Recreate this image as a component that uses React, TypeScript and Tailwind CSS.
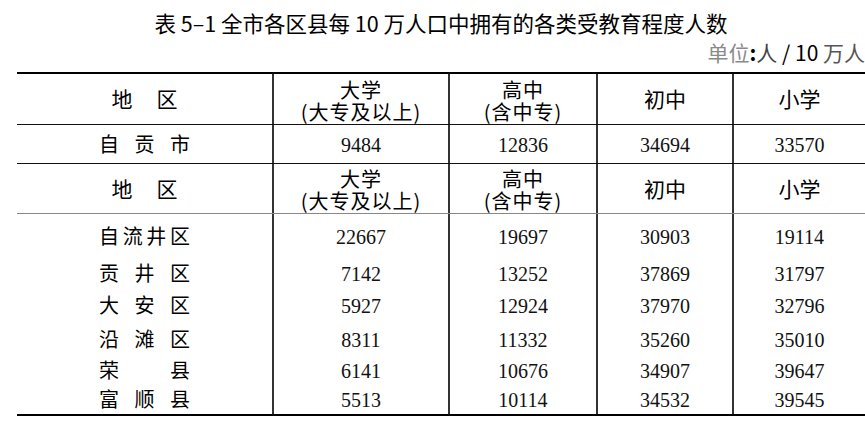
import React from "react";

const cjk = "font-['Noto_Sans_CJK_SC','Noto_Sans',sans-serif]";
const serif = "font-['Liberation_Serif','DejaVu_Serif',serif]";

const columns = ["w-[255px]", "w-[176px]", "w-[148px]", "w-[136px]", "w-[133px]"];

interface SpreadProps {
	text: string[];
	className: string;
}

// lays the characters of a region name out over a fixed width
const Spread = ({ text, className }: SpreadProps) => (
	<div className={`flex justify-between ${className}`}>
		{text.map((c, i) => (
			<span key={i}>{c}</span>
		))}
	</div>
);

const HeaderRow = ({ height, border }: { height: string; border: string }) => (
	<div className={`flex ${height} ${border} ${cjk} text-[21px] text-black`}>
		<div className={`${columns[0]} flex items-center justify-center`}>
			<Spread text={["地", "区"]} className="w-[66px]" />
		</div>
		<div className={`${columns[1]} border-l-2 border-[#333] flex items-center justify-center pt-[3px]`}>
			<p className="text-center text-[20px] leading-[22px] tracking-[1px] whitespace-pre-line">{"大学\n(大专及以上)"}</p>
		</div>
		<div className={`${columns[2]} border-l-2 border-[#333] flex items-center justify-center pt-[3px]`}>
			<p className="text-center text-[20px] leading-[22px] tracking-[1px] whitespace-pre-line">{"高中\n(含中专)"}</p>
		</div>
		<div className={`${columns[3]} border-l-2 border-[#333] flex items-center justify-center`}>初中</div>
		<div className={`${columns[4]} border-l-2 border-[#333] flex items-center justify-center`}>小学</div>
	</div>
);

interface DataRowProps {
	name: string[];
	values: string[];
	height: string;
	border?: string;
}

const DataRow = ({ name, values, height, border = "" }: DataRowProps) => (
	<div className={`flex ${height} ${border}`}>
		<div className={`${columns[0]} flex items-center justify-center ${cjk} text-[20px] text-black`}>
			<Spread text={name} className="w-[91px]" />
		</div>
		{values.map((v, i) => (
			<div
				key={i}
				className={`${columns[i + 1]} border-l-2 border-[#333] flex items-center justify-center pt-[2px] ${serif} text-[20px] text-[#111]`}
			>
				{v}
			</div>
		))}
	</div>
);

const rows = [
	{ name: ["自", "流", "井", "区"], values: ["22667", "19697", "30903", "19114"], height: "h-[44px]" },
	{ name: ["贡", "井", "区"], values: ["7142", "13252", "37869", "31797"], height: "h-[30px]" },
	{ name: ["大", "安", "区"], values: ["5927", "12924", "37970", "32796"], height: "h-[34px]" },
	{ name: ["沿", "滩", "区"], values: ["8311", "11332", "35260", "35010"], height: "h-[33px]" },
	{ name: ["荣", "县"], values: ["6141", "10676", "34907", "39647"], height: "h-[29px]" },
	{ name: ["富", "顺", "县"], values: ["5513", "10114", "34532", "39545"], height: "h-[30px]" },
];

export default function App() {
	return (
		<div className="w-[865px] h-[429px] bg-white overflow-hidden pl-[17px]">
			<h1 className={`mt-[8px] text-center leading-[30px] text-[21.5px] font-normal text-black ${cjk}`}>
				表 5–1 全市各区县每 10 万人口中拥有的各类受教育程度人数
			</h1>
			<div className={`mt-[2px] text-right leading-[24px] text-[21px] whitespace-nowrap ${cjk}`}>
				<span className="text-[#8a8a8a]">单位</span>
				<span className="text-black font-bold">:</span>
				<span className="text-[#444]">人 </span>
				<span className="text-black">/ 10 </span>
				<span className="text-[#555]">万人</span>
			</div>
			<div className="mt-[8px] w-[850px] border-t-2 border-b-2 border-black">
				<HeaderRow height="h-[51px]" border="border-b border-[#111]" />
				<DataRow
					name={["自", "贡", "市"]}
					values={["9484", "12836", "34694", "33570"]}
					height="h-[39px]"
					border="border-b border-[#111]"
				/>
				<HeaderRow height="h-[50px]" border="border-b border-[#888]" />
				{rows.map((r, i) => (
					<DataRow key={i} name={r.name} values={r.values} height={r.height} />
				))}
			</div>
		</div>
	);
}
